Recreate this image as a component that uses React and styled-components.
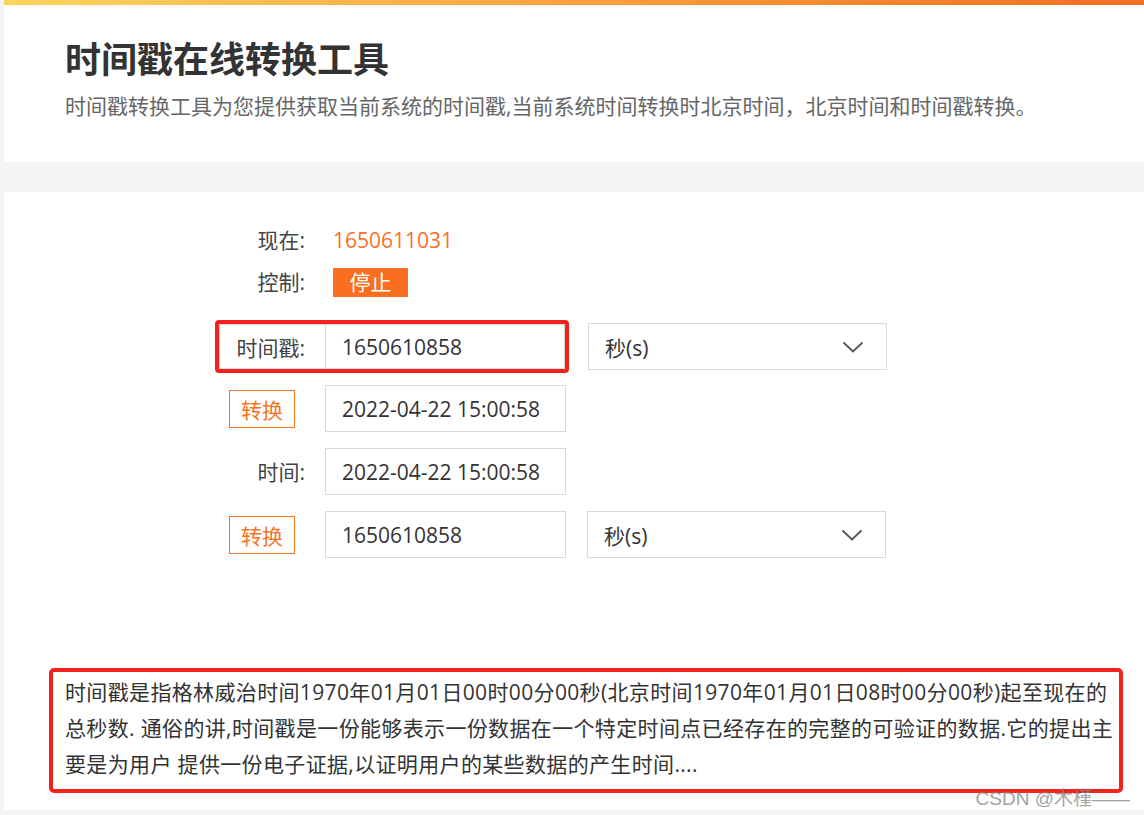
import React from "react";
import styled, { createGlobalStyle } from "styled-components";

const Global = createGlobalStyle`
  html, body { margin: 0; padding: 0; background: #f4f4f4; }
  body { font-family: "Open Sans", "Noto Sans CJK SC", sans-serif; color: #333; }
  * { box-sizing: border-box; }
`;

const Page = styled.div`
  position: relative;
  padding-left: 4px;
  min-height: 815px;
`;

const TopBar = styled.div`
  height: 5px;
  background: linear-gradient(90deg, #fad45e 0%, #f7a640 45%, #f36d22 100%);
`;

const Header = styled.header`
  background: #fff;
  height: 157px;
  padding: 28px 0 0 61px;
`;

const Title = styled.h1`
  margin: 0;
  font-size: 36px;
  line-height: 48px;
  font-weight: 700;
  color: #333;
  font-family: "Noto Sans CJK SC", sans-serif;
`;

const Subtitle = styled.p`
  margin: 10px 0 0;
  font-size: 21px;
  line-height: 30px;
  color: #666;
`;

const Card = styled.main`
  margin-top: 30px;
  background: #fff;
  height: 618px;
  padding-top: 33px;
`;

const Form = styled.div`
  display: flex;
  flex-direction: column;
  padding-left: 201px;
`;

const Row = styled.div`
  display: flex;
  align-items: center;
  margin-top: ${(p) => p.$mt || 0}px;
`;

const LabelCell = styled.div`
  width: 120px;
  display: flex;
  justify-content: flex-end;
  padding-right: ${(p) => (p.$button ? 30 : 20)}px;
  font-size: 21px;
  line-height: 30px;
  color: #444;
`;

const Value = styled.span`
  padding-left: 8px;
  font-size: 21px;
  line-height: 30px;
  color: #f7702a;
`;

const StopButton = styled.button`
  margin-left: 8px;
  width: 75px;
  height: 29px;
  border: none;
  background: #fa6e1f;
  color: #fff;
  font-family: inherit;
  font-size: 21px;
  line-height: 29px;
  padding: 0;
`;

const OutlineButton = styled.button`
  width: 66px;
  height: 38px;
  border: 1px solid #f5731f;
  background: #fff;
  color: #f5731f;
  font-family: inherit;
  font-size: 21px;
  padding: 0;
`;

const Highlight = styled.div`
  display: flex;
  margin-left: 10px;
  border: 4px solid #f5221b;
  border-radius: 4px;
`;

const Addon = styled.div`
  width: 106px;
  height: 45px;
  border: 1px solid #d9d9d9;
  border-right: none;
  display: flex;
  align-items: center;
  justify-content: flex-end;
  padding-right: 20px;
  font-size: 21px;
  color: #444;
`;

const Input = styled.div`
  width: ${(p) => p.$w || 241}px;
  height: ${(p) => p.$h || 47}px;
  border: 1px solid #d9d9d9;
  display: flex;
  align-items: center;
  padding-left: 16px;
  font-size: 21px;
  color: #333;
`;

const Select = styled.div`
  margin-left: ${(p) => p.$ml || 19}px;
  width: 299px;
  height: 47px;
  border: 1px solid #d9d9d9;
  display: flex;
  align-items: center;
  justify-content: space-between;
  padding: 0 22px 0 16px;
  font-size: 21px;
  color: #333;
`;

const Chevron = () => (
  <svg width="22" height="12" viewBox="0 0 22 12" fill="none">
    <path d="M1.5 1.5 L11 10.5 L20.5 1.5" stroke="#555" strokeWidth="1.8" strokeLinejoin="miter" />
  </svg>
);

const Desc = styled.div`
  margin: 110px 21px 0 45px;
  border: 4px solid #f5221b;
  border-radius: 5px;
  padding: 2px 2px 7px 12px;
  font-size: 21px;
  line-height: 36px;
  letter-spacing: 0.35px;
  color: #333;
`;

const Watermark = styled.div`
  position: absolute;
  right: 14px;
  bottom: 5px;
  font-family: "Liberation Sans", "Noto Sans CJK SC", sans-serif;
  font-size: 19px;
  color: rgba(130, 130, 130, 0.75);
`;

export default function App() {
  return (
    <Page>
      <Global />
      <TopBar />
      <Header>
        <Title>时间戳在线转换工具</Title>
        <Subtitle>时间戳转换工具为您提供获取当前系统的时间戳,当前系统时间转换时北京时间，北京时间和时间戳转换。</Subtitle>
      </Header>
      <Card>
        <Form>
          <Row>
            <LabelCell>现在:</LabelCell>
            <Value>1650611031</Value>
          </Row>
          <Row $mt={12}>
            <LabelCell>控制:</LabelCell>
            <StopButton>停止</StopButton>
          </Row>
          <Row $mt={23}>
            <Highlight>
              <Addon>时间戳:</Addon>
              <Input $w={240} $h={45}>1650610858</Input>
            </Highlight>
            <Select>
              <span>秒(s)</span>
              <Chevron />
            </Select>
          </Row>
          <Row $mt={12}>
            <LabelCell $button>
              <OutlineButton>转换</OutlineButton>
            </LabelCell>
            <Input>2022-04-22 15:00:58</Input>
          </Row>
          <Row $mt={16}>
            <LabelCell>时间:</LabelCell>
            <Input>2022-04-22 15:00:58</Input>
          </Row>
          <Row $mt={16}>
            <LabelCell $button>
              <OutlineButton>转换</OutlineButton>
            </LabelCell>
            <Input>1650610858</Input>
            <Select $ml={21}>
              <span>秒(s)</span>
              <Chevron />
            </Select>
          </Row>
        </Form>
        <Desc>
          时间戳是指格林威治时间1970年01月01日00时00分00秒(北京时间1970年01月01日08时00分00秒)起至现在的总秒数. 通俗的讲,时间戳是一份能够表示一份数据在一个特定时间点已经存在的完整的可验证的数据.它的提出主要是为用户 提供一份电子证据,以证明用户的某些数据的产生时间....
        </Desc>
      </Card>
      <Watermark>CSDN @木槿——</Watermark>
    </Page>
  );
}
